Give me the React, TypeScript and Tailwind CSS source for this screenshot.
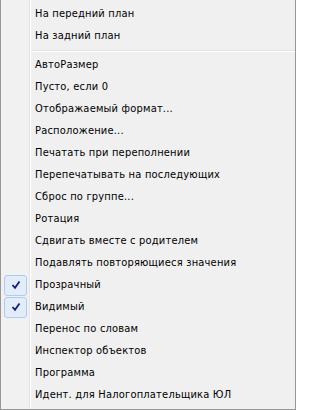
import React from 'react'

const top = ['На передний план', 'На задний план']

const items: { label: string; checked?: boolean }[] = [
	{ label: 'АвтоРазмер' },
	{ label: 'Пусто, если 0' },
	{ label: 'Отображаемый формат...' },
	{ label: 'Расположение...' },
	{ label: 'Печатать при переполнении' },
	{ label: 'Перепечатывать на последующих' },
	{ label: 'Сброс по группе...' },
	{ label: 'Ротация' },
	{ label: 'Сдвигать вместе с родителем' },
	{ label: 'Подавлять повторяющиеся значения' },
	{ label: 'Прозрачный', checked: true },
	{ label: 'Видимый', checked: true },
	{ label: 'Перенос по словам' },
	{ label: 'Инспектор объектов' },
	{ label: 'Программа' },
	{ label: 'Идент. для Налогоплательщика ЮЛ' },
]

const Check = () => (
	<div className="w-[23px] h-[21px] ml-[3px] rounded-[3px] border border-[#aeccf1] bg-[#e3edf9] flex items-center justify-center">
		<svg width="10" height="10" viewBox="0 0 10 10">
			<path d="M1.5 5 L4 7.8 L8.5 1.5" fill="none" stroke="#141c7a" strokeWidth="1.8" />
		</svg>
	</div>
)

const Row = ({ label, checked }: { label: string; checked?: boolean }) => (
	<div className="h-[22px] flex items-center">
		<div className="w-[28px] h-full flex items-center">{checked && <Check />}</div>
		<span className="pl-[6px] whitespace-nowrap tracking-[0.2px]">{label}</span>
	</div>
)

const App = () => {
	return (
		<div
			className="w-[296px] h-[410px] bg-[#f0f0f0] border-l border-r border-b border-[#979797] text-black text-[11px] overflow-hidden"
			style={{ fontFamily: '"DejaVu Sans Condensed", "DejaVu Sans", sans-serif' }}
		>
			<div className="relative h-full pt-[3px]">
				{/* gutter */}
				<div className="absolute left-0 top-0 bottom-0 w-[29px] bg-[#f1f1f1] border-r border-[#e2e3e3]" />
				<div className="absolute left-[29px] top-0 bottom-0 w-px bg-white" />
				<div className="relative">
					{top.map((t) => (
						<Row key={t} label={t} />
					))}
					<div className="h-[7px] flex items-center pl-[30px]">
						<div className="w-full h-[2px] border-t border-[#e2e3e3] border-b border-b-white" />
					</div>
					{items.map((it) => (
						<Row key={it.label} label={it.label} checked={it.checked} />
					))}
				</div>
			</div>
		</div>
	)
}

export default App
